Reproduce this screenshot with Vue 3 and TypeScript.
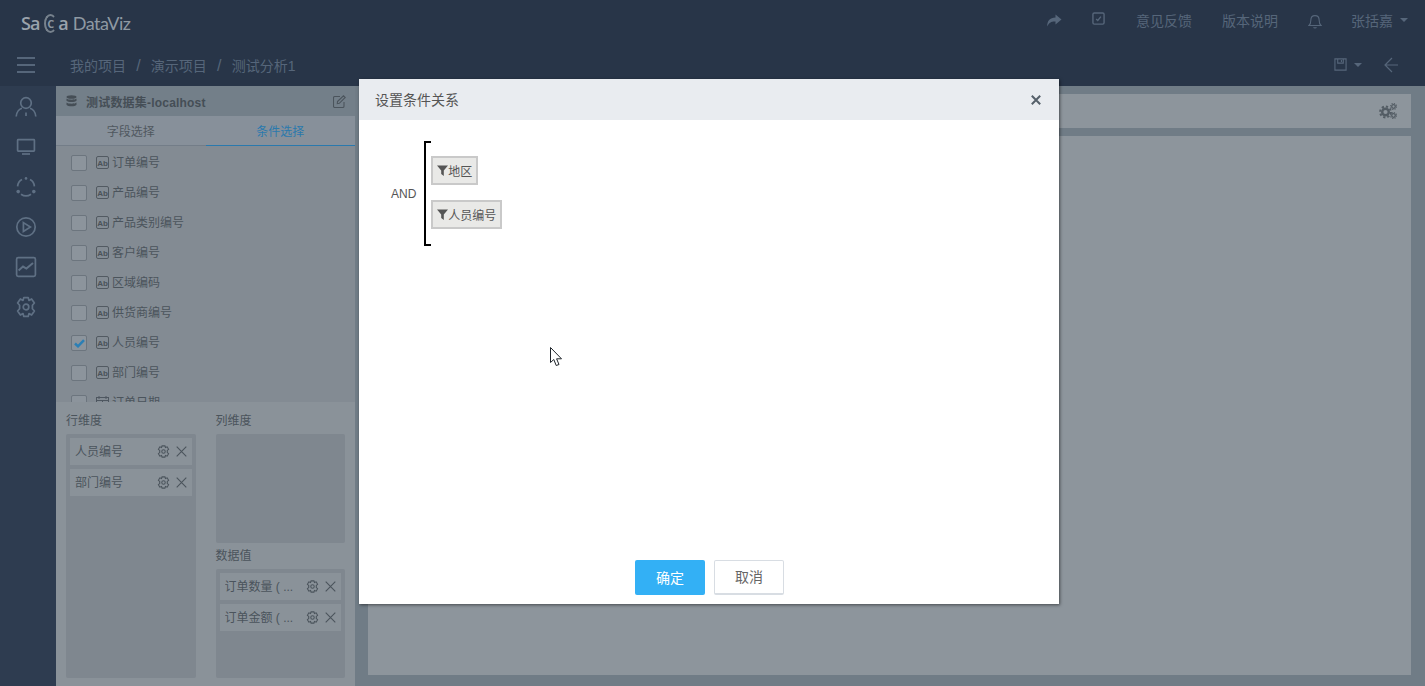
<script setup lang="ts">
interface Field {
  name: string
  date?: boolean
  checked?: boolean
}

const fields: Field[] = [
  { name: '订单编号' },
  { name: '产品编号' },
  { name: '产品类别编号' },
  { name: '客户编号' },
  { name: '区域编码' },
  { name: '供货商编号' },
  { name: '人员编号', checked: true },
  { name: '部门编号' },
  { name: '订单日期', date: true },
]

const rowDims = ['人员编号', '部门编号']
const values = ['订单数量 ( ...', '订单金额 ( ...']
const navIcons = ['user', 'screen', 'cycle', 'play', 'chart', 'gear']
</script>

<template>
  <div class="page">
    <header class="topbar">
      <div class="logo">
        <span class="logo-bold sa">Sa</span><span class="logo-c">C</span><span class="logo-bold">a</span>
        <span class="logo-name">DataViz</span>
      </div>
      <div class="top-actions">
        <svg class="ic share" width="16" height="14" viewBox="0 0 16 14"><path d="M9.5 0.5 15.5 5.5 9.5 10.5V7.4C5.5 7.2 3 8.4 1.2 12.6 1 7 3.8 3.4 9.5 3.4Z" fill="#56667a" /></svg>
        <svg class="ic check" width="13" height="13" viewBox="0 0 14 14" fill="none" stroke="#56667a"><rect x="1" y="1" width="12" height="12" rx="1.5" stroke-width="1.5" /><path d="M4.5 7.5 6.200 9.200 9.600 5" stroke-width="1.5" /></svg>
        <span class="top-link feedback">意见反馈</span>
        <span class="top-link notes">版本说明</span>
        <svg class="ic bell" width="14" height="15" viewBox="0 0 14 15" fill="none" stroke="#56667a" stroke-width="1.1"><path d="M1 11.5C2.6 10.2 2.8 8.6 2.8 6.4 2.8 3.6 4.6 1.6 7 1.6S11.2 3.6 11.2 6.4C11.2 8.6 11.4 10.2 13 11.5Z" /><path d="M5.6 13.2C6 14.2 8 14.2 8.4 13.2" /></svg>
        <span class="top-link user">张括嘉</span>
        <i class="caret"></i>
      </div>
    </header>

    <div class="crumbbar">
      <div class="burger"><i></i><i></i><i></i></div>
      <nav class="crumbs">
        <span>我的项目</span><em>/</em><span>演示项目</span><em>/</em><span>测试分析1</span>
      </nav>
      <div class="crumb-tools">
        <svg width="13" height="13" viewBox="0 0 14 14" fill="none" stroke="#56667a" stroke-width="1.2"><path d="M1 1H13V13H1Z" /><path d="M4 1V5.5H10V1M8 2.2V4.4" /></svg>
        <i class="caret"></i>
        <svg class="back" width="14" height="16" viewBox="0 0 14 16" fill="none" stroke="#56667a" stroke-width="1.200"><path d="M14 8H1M8 1 1 8 8 15" /></svg>
      </div>
    </div>

    <div class="workspace">
      <aside class="sidenav">
        <div v-for="name in navIcons" :key="name" class="nav-item">
          <svg width="22" height="22" viewBox="0 0 22 22" fill="none" stroke="#5f7084" stroke-width="1.7">
            <template v-if="name === 'user'">
              <circle cx="11" cy="7" r="5.3" />
              <path d="M1.2 20.5C1.6 15.6 4.6 12.8 7 12.2M20.8 20.5C20.4 15.6 17.4 12.8 15 12.2M11 16.5V20" />
            </template>
            <template v-else-if="name === 'screen'">
              <rect x="2.6" y="3.6" width="16.8" height="11.600" rx="0.6" />
              <path d="M7 18H15" />
            </template>
            <template v-else-if="name === 'cycle'">
              <path d="M7 3.6A8.4 8.4 0 0 0 2.6 10.4M19.4 10.4A8.4 8.4 0 0 0 15 3.6M6 18.2A8.6 8.6 0 0 0 16 18.2" />
              <circle cx="11" cy="2.4" r="1.3" fill="#5f7084" stroke="none" />
              <circle cx="3.2" cy="15.6" r="1.8" fill="#5f7084" stroke="none" />
              <circle cx="18.8" cy="15.6" r="1.8" fill="#5f7084" stroke="none" />
            </template>
            <template v-else-if="name === 'play'">
              <circle cx="11" cy="11" r="9.2" />
              <path d="M8.4 6.6 15.4 11 8.4 15.4Z" />
            </template>
            <template v-else-if="name === 'chart'">
              <rect x="1.6" y="1.6" width="18.8" height="18.8" rx="1.6" />
              <path d="M3.6 14.4 8 10.6 11.4 12.6 18 7" stroke-width="2" />
            </template>
            <template v-else>
              <path d="M8.8 1.6H13.2L14 4.4 16.6 3 19.4 7 17.4 9.2V12.8L19.4 15 16.6 19 14 17.6 13.2 20.4H8.8L8 17.6 5.4 19 2.6 15 4.6 12.8V9.2L2.6 7 5.4 3 8 4.4Z" stroke-linejoin="round" />
              <circle cx="11" cy="11" r="2.8" />
            </template>
          </svg>
        </div>
      </aside>

      <section class="panel">
        <div class="panel-head">
          <svg width="11" height="12" viewBox="0 0 11 12" fill="#454e56"><ellipse cx="5.5" cy="2" rx="5" ry="1.8" /><path d="M.5 3.6C2 5.2 9 5.2 10.500 3.600V5.800C9 7.400 2 7.400 .5 5.800ZM.5 7.600C2 9.200 9 9.200 10.500 7.600V9.800C9 11.800 2 11.800 .5 9.800Z" /></svg>
          <span class="dataset">测试数据集-localhost</span>
          <svg class="edit" width="13" height="13" viewBox="0 0 13 13" fill="none" stroke="#4b545c" stroke-width="1.1"><path d="M11 7V11.200A1.300 1.300 0 0 1 9.700 12.500H1.800A1.300 1.300 0 0 1 .5 11.200V2.800A1.300 1.300 0 0 1 1.800 1.500H7M4.500 6.500 10.500 .8 12.200 2.500 6.300 8.300 4.300 8.600Z" /></svg>
        </div>
        <div class="tabs">
          <div class="tab">字段选择</div>
          <div class="tab active">条件选择</div>
        </div>
        <ul class="field-list">
          <li v-for="f in fields" :key="f.name" class="field">
            <span class="box">
              <svg v-if="f.checked" width="11" height="9" viewBox="0 0 11 9"><path d="M1 4.500 4 7.300 10 1.200" fill="none" stroke="#2b7fb5" stroke-width="2.500" /></svg>
            </span>
            <svg v-if="!f.date" class="ab" width="13" height="13" viewBox="0 0 13 13"><rect x=".5" y=".5" width="12" height="12" rx="1.500" fill="none" stroke="#525a62" /><text x="6.500" y="9.500" text-anchor="middle" font-size="8" font-weight="700" fill="#4a5259">Ab</text></svg>
            <svg v-else class="ab" width="13" height="13" viewBox="0 0 13 13" fill="none" stroke="#4e5760"><rect x=".5" y="1.500" width="12" height="11" /><path d="M3 0V3M10 0V3M.5 4.500H12.500M6.500 4.500V12.500" /></svg>
            <span class="field-name">{{ f.name }}</span>
          </li>
        </ul>
        <div class="drop-zones">
          <div class="zone-col">
            <div class="zone-label">行维度</div>
            <div class="well grow">
              <div v-for="d in rowDims" :key="d" class="chip">
                <span class="chip-text">{{ d }}</span>
                <svg width="13" height="13" viewBox="0 0 12 12" fill="none" stroke="#4b545c"><path d="M4.700 .8H7.300L7.800 2.300 9.400 1.700 10.700 4 9.500 5V7L10.700 8 9.400 10.300 7.800 9.700 7.300 11.200H4.700L4.200 9.700 2.600 10.300 1.300 8 2.500 7V5L1.300 4 2.600 1.700 4.200 2.300Z" /><circle cx="6" cy="6" r="1.600" /></svg>
                <svg class="chip-x" width="11" height="11" viewBox="0 0 11 11"><path d="M.7 .7 10.300 10.300M10.300 .7 .7 10.300" stroke="#4b545c" stroke-width="1.100" /></svg>
              </div>
            </div>
          </div>
          <div class="zone-col">
            <div class="zone-label">列维度</div>
            <div class="well tall"></div>
            <div class="zone-label second">数据值</div>
            <div class="well tall">
              <div v-for="d in values" :key="d" class="chip">
                <span class="chip-text">{{ d }}</span>
                <svg width="13" height="13" viewBox="0 0 12 12" fill="none" stroke="#4b545c"><path d="M4.700 .8H7.300L7.800 2.300 9.400 1.700 10.700 4 9.500 5V7L10.700 8 9.400 10.300 7.800 9.700 7.300 11.200H4.700L4.200 9.700 2.600 10.300 1.300 8 2.500 7V5L1.300 4 2.600 1.700 4.200 2.300Z" /><circle cx="6" cy="6" r="1.600" /></svg>
                <svg class="chip-x" width="11" height="11" viewBox="0 0 11 11"><path d="M.7 .7 10.300 10.300M10.300 .7 .7 10.300" stroke="#4b545c" stroke-width="1.100" /></svg>
              </div>
            </div>
          </div>
        </div>
      </section>

      <main class="stage">
        <div class="stage-bar">
          <svg width="18" height="16" viewBox="0 0 18 16" fill="none" stroke="#535c64">
            <circle cx="6.500" cy="9" r="3.300" stroke-width="2.400" />
            <circle cx="6.500" cy="9" r="5.400" stroke-width="2" stroke-dasharray="2.200 2" />
            <circle cx="14.500" cy="3.500" r="1.800" stroke-width="1.300" />
            <circle cx="14.500" cy="3.500" r="3" stroke-width="1.100" stroke-dasharray="1.200 1.150" />
            <circle cx="14.500" cy="12.500" r="1.800" stroke-width="1.300" />
            <circle cx="14.500" cy="12.500" r="3" stroke-width="1.100" stroke-dasharray="1.200 1.150" />
          </svg>
        </div>
        <div class="canvas"></div>
      </main>
    </div>

    <div class="dialog">
      <div class="dialog-head">
        <span class="dialog-title">设置条件关系</span>
        <svg width="10" height="10" viewBox="0 0 10 10"><path d="M.8 .8 9.200 9.200M9.200 .8 .8 9.200" stroke="#55606a" stroke-width="2" /></svg>
      </div>
      <div class="dialog-body">
        <div class="relation">
          <span class="op">AND</span>
          <div class="bracket">
            <div class="tag"><svg width="11" height="11" viewBox="0 0 11 11"><path d="M0 .5H11L6.800 5.500V11L4.200 9V5.500Z" fill="#555" /></svg>地区</div>
            <div class="tag"><svg width="11" height="11" viewBox="0 0 11 11"><path d="M0 .5H11L6.800 5.500V11L4.200 9V5.500Z" fill="#555" /></svg>人员编号</div>
          </div>
        </div>
      </div>
      <div class="dialog-foot">
        <button class="btn primary">确定</button>
        <button class="btn">取消</button>
      </div>
    </div>

    <svg class="cursor" width="13" height="20" viewBox="0 0 13 20"><path d="M.5 .5V15.500L3.800 12.500 6.200 18.500 9 17.500 6.600 11.800H11.500Z" fill="#fff" stroke="#20252b" /></svg>
  </div>
</template>

<style>
html,
body {
  margin: 0;
  overflow: hidden;
}
</style>

<style scoped>
.page {
  position: relative;
  width: 1425px;
  height: 686px;
  overflow: hidden;
  display: flex;
  flex-direction: column;
  font-family: "Liberation Sans", "Noto Sans CJK SC", sans-serif;
  font-size: 12px;
  color: #4b545c;
  background: #283548;
}

.topbar {
  height: 43px;
  flex: none;
  display: flex;
  align-items: center;
  justify-content: space-between;
  padding-left: 21px;
}

.logo {
  display: flex;
  align-items: baseline;
  padding-top: 3px;
  font-family: "Open Sans", sans-serif;
  font-size: 18px;
  color: #9aa3ac;
}

.logo-bold {
  font-weight: 600;
}

.sa {
  letter-spacing: -1px;
}

.logo-c {
  width: 9px;
  height: 15px;
  margin: 0 1px 0 5px;
  align-self: center;
  display: flex;
  align-items: center;
  justify-content: center;
  border: 2px solid #77828d;
  border-right-color: transparent;
  border-radius: 50%;
  font-size: 11px;
  font-weight: 700;
  line-height: 1;
  color: #8b95a0;
}

.logo-name {
  margin-left: 4px;
  font-family: "Lato", sans-serif;
  font-size: 18px;
  letter-spacing: -0.5px;
  color: #8f99a3;
}

.top-actions {
  display: flex;
  align-items: center;
  font-size: 14px;
  color: #56667a;
  padding: 0 17px 4px 0;
}

.top-link {
  white-space: nowrap;
}

.share {
  margin-top: 2px;
}

.check {
  margin: 0 0 2px 30px;
}

.feedback {
  margin-left: 31px;
}

.notes {
  margin-left: 30px;
}

.bell {
  margin: 4px 0 0 30px;
}

.user {
  margin-left: 29px;
}

.caret {
  display: inline-block;
  width: 0;
  height: 0;
  margin-left: 7px;
  border-left: 4px solid transparent;
  border-right: 4px solid transparent;
  border-top: 4px solid #56667a;
}

.crumbbar {
  height: 43px;
  flex: none;
  display: flex;
  align-items: center;
}

.burger {
  width: 18px;
  margin-left: 17px;
  display: flex;
  flex-direction: column;
  gap: 5px;
}

.burger i {
  display: block;
  height: 2px;
  background: #56667a;
}

.crumbs {
  margin-left: 35px;
  display: flex;
  align-items: baseline;
  gap: 10.2px;
  font-size: 14px;
  color: #56667a;
}

.crumbs em {
  font-size: 16px;
  font-style: normal;
}

.crumb-tools {
  margin-left: auto;
  display: flex;
  align-items: center;
  padding-right: 27px;
}

.back {
  margin-left: 22px;
}

.workspace {
  flex: 1;
  min-height: 0;
  display: flex;
}

.sidenav {
  width: 56px;
  flex: none;
  box-sizing: border-box;
  background: #2e3c50;
  padding: 1px 4px 0 0;
}

.nav-item {
  height: 40px;
  display: flex;
  align-items: center;
  justify-content: center;
}

.panel {
  width: 299px;
  flex: none;
  display: flex;
  flex-direction: column;
  background: #838b93;
}

.panel-head {
  height: 30px;
  flex: none;
  display: flex;
  align-items: center;
  padding: 0 9px 0 10px;
  background: #737f89;
}

.dataset {
  margin-left: 9px;
  font-weight: 700;
  letter-spacing: 0.2px;
  color: #454e56;
}

.edit {
  margin-left: auto;
}

.tabs {
  height: 30px;
  flex: none;
  display: flex;
  background: #87909a;
  border-bottom: 1px solid #737d88;
  box-sizing: border-box;
}

.tab {
  flex: 1;
  display: flex;
  align-items: center;
  justify-content: center;
  color: #50585f;
}

.tab.active {
  color: #2a79ad;
  border-bottom: 1px solid #2a79ad;
  margin-bottom: -1px;
}

.field-list {
  height: 256px;
  flex: none;
  overflow: hidden;
  margin: 0;
  padding: 2px 0 0 15px;
  box-sizing: border-box;
  list-style: none;
  background: #838b93;
}

.field {
  height: 30px;
  display: flex;
  align-items: center;
  color: #4b545c;
}

.field-name {
  margin-bottom: 4px;
}

.box {
  width: 16px;
  height: 16px;
  box-sizing: border-box;
  display: flex;
  align-items: center;
  justify-content: center;
  border: 1px solid #6c757e;
  border-radius: 2px;
  background: #8c949c;
}

.ab {
  margin: 0 3px 2px 9px;
}

.drop-zones {
  flex: 1;
  min-height: 0;
  display: flex;
  gap: 20px;
  padding: 0 10px 8px;
  background: #8a9299;
}

.zone-col {
  flex: 1;
  min-width: 0;
  display: flex;
  flex-direction: column;
}

.zone-label {
  height: 32px;
  flex: none;
  padding-top: 11px;
  box-sizing: border-box;
  line-height: 16px;
}

.zone-label.second {
  height: 26px;
  padding-top: 5px;
}

.well {
  display: flex;
  flex-direction: column;
  gap: 4px;
  padding: 4px;
  border-radius: 2px;
  background: #7f878f;
  box-sizing: border-box;
}

.well.grow {
  flex: 1;
}

.well.tall {
  height: 109px;
  flex: none;
}

.chip {
  height: 27px;
  flex: none;
  display: flex;
  align-items: center;
  padding: 0 5px;
  background: #8a9299;
}

.chip-text {
  flex: 1;
  margin-bottom: 2px;
  white-space: nowrap;
  overflow: hidden;
}

.chip-x {
  margin-left: 6px;
}

.stage {
  flex: 1;
  min-width: 0;
  display: flex;
  flex-direction: column;
  gap: 8px;
  padding: 8px 14px 11px 13px;
  background: #707c86;
}

.stage-bar {
  height: 34px;
  flex: none;
  display: flex;
  align-items: center;
  justify-content: flex-end;
  padding-right: 14px;
  background: #8d959c;
}

.canvas {
  flex: 1;
  background: #8d959c;
}

.dialog {
  position: absolute;
  left: 359px;
  top: 79px;
  width: 700px;
  height: 525px;
  display: flex;
  flex-direction: column;
  background: #fff;
  box-shadow: 1px 1px 3px rgba(0, 0, 0, 0.5);
}

.dialog-head {
  height: 41px;
  flex: none;
  display: flex;
  align-items: center;
  justify-content: space-between;
  padding: 0 18px 0 16px;
  background: #e9ecf0;
  font-size: 14px;
  color: #555;
}

.dialog-title {
  margin-bottom: 2px;
}

.dialog-body {
  flex: 1;
  min-height: 0;
  padding: 21px 0 0 32px;
}

.relation {
  display: flex;
  align-items: center;
  gap: 8px;
  font-size: 12px;
  color: #555;
}

.bracket {
  position: relative;
  width: 200px;
  height: 105px;
  box-sizing: border-box;
  padding: 15px 0 0 5px;
  display: flex;
  flex-direction: column;
  align-items: flex-start;
  gap: 15px;
  border-left: 2px solid #000;
}

.bracket::before,
.bracket::after {
  content: "";
  position: absolute;
  left: 0;
  width: 5px;
  height: 2px;
  background: #000;
}

.bracket::before {
  top: 0;
}

.bracket::after {
  bottom: 0;
}

.tag {
  height: 29px;
  box-sizing: border-box;
  display: flex;
  align-items: center;
  padding: 0 4px;
  border: 2px solid #c9c9c9;
  background: #e9e9e7;
  color: #555;
}

.dialog-foot {
  height: 44px;
  flex: none;
  display: flex;
  justify-content: center;
  align-items: flex-start;
  gap: 9px;
  padding-left: 1px;
  box-sizing: border-box;
}

.btn {
  width: 70px;
  height: 35px;
  box-sizing: border-box;
  border: 1px solid #d8dde3;
  border-bottom-width: 2px;
  border-radius: 2px;
  background: #fff;
  color: #666;
  font-family: inherit;
  font-size: 14px;
  padding: 0 0 2px;
}

.btn.primary {
  border: none;
  background: #33b0f5;
  color: #fff;
}

.cursor {
  position: absolute;
  left: 550px;
  top: 347px;
}
</style>
